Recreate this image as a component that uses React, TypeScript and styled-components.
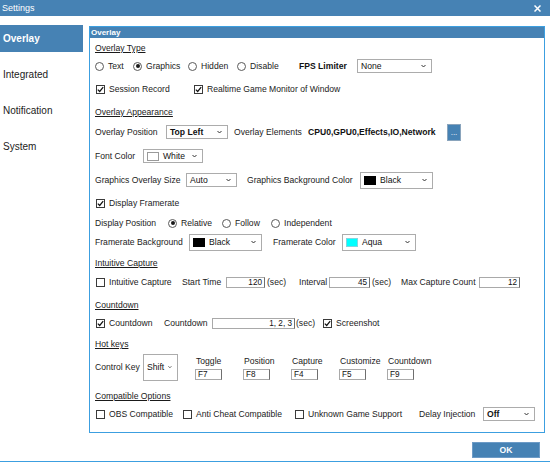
import React from "react";
import styled, { createGlobalStyle } from "styled-components";

const BLUE = "#4682b4";
const LINE = "#3c9fe0";

const GlobalStyle = createGlobalStyle`
  html, body {
    margin: 0;
    padding: 0;
    background: #ffffff;
  }

  body {
    font-family: "Liberation Sans", Arial, sans-serif;
    color: #1b1b1b;
  }

  * {
    box-sizing: border-box;
  }
`;

const Window = styled.div`
  width: 550px;
  height: 462px;
  display: flex;
  flex-direction: column;
  border-bottom: 1px solid ${LINE};
  background: #fff;
`;

const TitleBar = styled.div`
  height: 16px;
  flex-shrink: 0;
  background: ${BLUE};
  display: flex;
  align-items: center;
  justify-content: space-between;
  padding: 0 9px 0 2px;

  .title {
    color: #fff;
    font-size: 9px;
  }
`;

const Body = styled.div`
  flex: 1;
  display: flex;
  padding-top: 9px;
`;

const Sidebar = styled.nav`
  width: 83px;
  flex-shrink: 0;
  display: flex;
  flex-direction: column;
  gap: 9px;
`;

const NavItem = styled.div<{ $active?: boolean }>`
  height: 27px;
  display: flex;
  align-items: center;
  padding: 0 0 1px 3px;
  font-size: 10px;
  color: ${(p) => (p.$active ? "#fff" : "#1b1b1b")};
  background: ${(p) => (p.$active ? BLUE : "transparent")};
  font-weight: ${(p) => (p.$active ? 700 : 400)};
`;

const Content = styled.div`
  flex: 1;
  display: flex;
  flex-direction: column;
  margin: 1px 5px 0 6px;
`;

const Panel = styled.section`
  border: 1px solid ${LINE};
  padding-bottom: 10px;
`;

const PanelHeader = styled.div`
  height: 11px;
  background: ${BLUE};
  color: #fff;
  font-size: 8px;
  font-weight: 700;
  line-height: 11px;
  padding-left: 1px;
`;

const PanelBody = styled.div`
  padding-left: 5px;
  display: flex;
  flex-direction: column;
  font-size: 8.6px;
`;

const Heading = styled.div<{ $mt: number }>`
  height: 14px;
  margin-top: ${(p) => p.$mt}px;
  display: flex;
  align-items: center;
  text-decoration: underline;
  color: #1a1a1a;
`;

const Row = styled.div<{ $mt: number; $h?: number; $top?: boolean }>`
  height: ${(p) => p.$h ?? 16}px;
  margin-top: ${(p) => p.$mt}px;
  display: flex;
  align-items: ${(p) => (p.$top ? "flex-start" : "center")};
  white-space: nowrap;
`;

const Cell = styled.div<{ $w?: number }>`
  width: ${(p) => (p.$w ? `${p.$w}px` : "auto")};
  flex-shrink: 0;
  display: flex;
  align-items: center;
  height: 100%;
`;

const Text = styled.span<{ $bold?: boolean; $pl?: number }>`
  font-weight: ${(p) => (p.$bold ? 700 : 400)};
  padding-left: ${(p) => p.$pl ?? 0}px;
  color: ${(p) => (p.$bold ? "#111" : "#1b1b1b")};
`;

const SelectBox = styled.div<{ $w: number; $h: number; $bold?: boolean }>`
  width: ${(p) => p.$w}px;
  height: ${(p) => p.$h}px;
  flex-shrink: 0;
  border: 1px solid #acacac;
  background: #fff;
  display: flex;
  align-items: center;
  padding: 0 5px 0 3px;
  gap: 4px;
  font-weight: ${(p) => (p.$bold ? 700 : 400)};
  color: #111;

  .value {
    flex: 1;
  }
`;

const Swatch = styled.span<{ $color: string }>`
  width: 12px;
  height: 9px;
  background: ${(p) => p.$color};
  border: 1px solid ${(p) => (p.$color === "#ffffff" ? "#9a9a9a" : p.$color === "#000000" ? "#000" : "#7fd6e0")};
`;

const InputBox = styled.div<{ $w: number; $right?: boolean }>`
  width: ${(p) => p.$w}px;
  height: 11px;
  flex-shrink: 0;
  border: 1px solid #a9a9a9;
  border-right-color: #6f6f6f;
  background: #fff;
  display: flex;
  align-items: center;
  justify-content: ${(p) => (p.$right ? "flex-end" : "flex-start")};
  padding: 0 2px;
  font-size: 8.2px;
  color: #111;
`;

const BoxMark = styled.span`
  width: 9px;
  height: 9px;
  flex-shrink: 0;
  border: 1px solid #3a3a3a;
  background: #fff;
  display: flex;
  align-items: center;
  justify-content: center;
  margin: 0 4px 0 1px;
`;

const RadioMark = styled.span<{ $on?: boolean }>`
  width: 9px;
  height: 9px;
  flex-shrink: 0;
  border-radius: 50%;
  border: 1px solid #5a5a5a;
  background: #fff;
  display: flex;
  align-items: center;
  justify-content: center;
  margin-right: 4px;

  &::after {
    content: "";
    display: ${(p) => (p.$on ? "block" : "none")};
    width: 4px;
    height: 4px;
    border-radius: 50%;
    background: #1a1a1a;
  }
`;

const DotsButton = styled.div`
  width: 14px;
  height: 17px;
  background: ${BLUE};
  border: 1px solid #8aa4bc;
  color: #fff;
  font-size: 8px;
  display: flex;
  align-items: flex-end;
  justify-content: center;
  padding-bottom: 3px;
  line-height: 1;
`;

const KeyColumn = styled.div`
  width: 48px;
  flex-shrink: 0;
  display: flex;
  flex-direction: column;

  .key-label {
    height: 14px;
    display: flex;
    align-items: center;
    padding-left: 1px;
  }

  & > div:last-child {
    margin-top: 1px;
  }
`;

const Footer = styled.div`
  display: flex;
  justify-content: flex-end;
  padding-right: 5px;
  margin-top: 9px;
`;

const OkButton = styled.button`
  width: 68px;
  height: 16px;
  border: 1px solid #6d9bc6;
  background: ${BLUE};
  color: #fff;
  font-family: inherit;
  font-size: 8.6px;
  font-weight: 700;
  padding: 0;
`;

const Chevron = () => (
  <svg width="5" height="4" viewBox="0 0 5 4">
    <polyline points="0.5,1 2.5,3 4.5,1" fill="none" stroke="#333" strokeWidth="1" />
  </svg>
);

const Select = ({
  w,
  h = 14,
  value,
  swatch,
  bold,
}: {
  w: number;
  h?: number;
  value: string;
  swatch?: string;
  bold?: boolean;
}) => (
  <SelectBox $w={w} $h={h} $bold={bold}>
    {swatch && <Swatch $color={swatch} />}
    <span className="value">{value}</span>
    <Chevron />
  </SelectBox>
);

const Check = ({ label, on }: { label: string; on?: boolean }) => (
  <>
    <BoxMark>
      {on && (
        <svg width="7" height="7" viewBox="0 0 7 7">
          <polyline points="0.8,3.6 2.7,5.5 6.2,1.2" fill="none" stroke="#111" strokeWidth="1.2" />
        </svg>
      )}
    </BoxMark>
    <Text>{label}</Text>
  </>
);

const Radio = ({ label, on }: { label: string; on?: boolean }) => (
  <>
    <RadioMark $on={on} />
    <Text>{label}</Text>
  </>
);

const HOTKEYS = [
  { name: "Toggle", key: "F7" },
  { name: "Position", key: "F8" },
  { name: "Capture", key: "F4" },
  { name: "Customize", key: "F5" },
  { name: "Countdown", key: "F9" },
];

const NAV = ["Overlay", "Integrated", "Notification", "System"];

export default function App() {
  return (
    <>
      <GlobalStyle />
      <Window>
        <TitleBar>
          <span className="title">Settings</span>
          <svg width="7" height="7" viewBox="0 0 7 7">
            <path d="M0.5 0.5 L6.5 6.5 M6.5 0.5 L0.5 6.5" stroke="#fff" strokeWidth="1.5" />
          </svg>
        </TitleBar>
        <Body>
          <Sidebar>
            {NAV.map((n, i) => (
              <NavItem key={n} $active={i === 0}>
                {n}
              </NavItem>
            ))}
          </Sidebar>
          <Content>
            <Panel>
              <PanelHeader>Overlay</PanelHeader>
              <PanelBody>
                <Heading $mt={3}>Overlay Type</Heading>
                <Row $mt={3}>
                  <Cell $w={38}><Radio label="Text" /></Cell>
                  <Cell $w={55}><Radio label="Graphics" on /></Cell>
                  <Cell $w={49}><Radio label="Hidden" /></Cell>
                  <Cell $w={62}><Radio label="Disable" /></Cell>
                  <Cell $w={58}><Text $bold>FPS Limiter</Text></Cell>
                  <Select w={75} value="None" />
                </Row>
                <Row $mt={7}>
                  <Cell $w={98}><Check label="Session Record" on /></Cell>
                  <Cell><Check label="Realtime Game Monitor of Window" on /></Cell>
                </Row>

                <Heading $mt={8}>Overlay Appearance</Heading>
                <Row $mt={5}>
                  <Cell $w={71}><Text>Overlay Position</Text></Cell>
                  <Cell $w={68}><Select w={62} value="Top Left" bold /></Cell>
                  <Cell $w={74}><Text>Overlay Elements</Text></Cell>
                  <Cell $w={139}><Text $bold>CPU0,GPU0,Effects,IO,Network</Text></Cell>
                  <DotsButton>...</DotsButton>
                </Row>
                <Row $mt={8}>
                  <Cell $w={48}><Text>Font Color</Text></Cell>
                  <Select w={60} value="White" swatch="#ffffff" />
                </Row>
                <Row $mt={8}>
                  <Cell $w={91}><Text>Graphics Overlay Size</Text></Cell>
                  <Cell $w={61}><Select w={51} value="Auto" /></Cell>
                  <Cell $w={113}><Text>Graphics Background Color</Text></Cell>
                  <Select w={73} h={17} value="Black" swatch="#000000" />
                </Row>
                <Row $mt={7}>
                  <Cell><Check label="Display Framerate" on /></Cell>
                </Row>
                <Row $mt={4}>
                  <Cell $w={73}><Text>Display Position</Text></Cell>
                  <Cell $w={54}><Radio label="Relative" on /></Cell>
                  <Cell $w={49}><Radio label="Follow" /></Cell>
                  <Cell><Radio label="Independent" /></Cell>
                </Row>
                <Row $mt={3}>
                  <Cell $w={94}><Text>Framerate Background</Text></Cell>
                  <Cell $w={84}><Select w={73} h={17} value="Black" swatch="#000000" /></Cell>
                  <Cell $w={69}><Text>Framerate Color</Text></Cell>
                  <Select w={74} h={17} value="Aqua" swatch="#00ffff" />
                </Row>

                <Heading $mt={6}>Intuitive Capture</Heading>
                <Row $mt={4}>
                  <Cell $w={87}><Check label="Intuitive Capture" /></Cell>
                  <Cell $w={44}><Text>Start Time</Text></Cell>
                  <InputBox $w={39} $right>120</InputBox>
                  <Cell $w={34}><Text $pl={2}>(sec)</Text></Cell>
                  <Cell $w={30}><Text>Interval</Text></Cell>
                  <InputBox $w={41} $right>45</InputBox>
                  <Cell $w={31}><Text $pl={2}>(sec)</Text></Cell>
                  <Cell $w={78}><Text>Max Capture Count</Text></Cell>
                  <InputBox $w={41} $right>12</InputBox>
                </Row>

                <Heading $mt={8}>Countdown</Heading>
                <Row $mt={3}>
                  <Cell $w={69}><Check label="Countdown" on /></Cell>
                  <Cell $w={48}><Text>Countdown</Text></Cell>
                  <InputBox $w={83} $right>1, 2, 3</InputBox>
                  <Cell $w={27}><Text $pl={1}>(sec)</Text></Cell>
                  <Cell><Check label="Screenshot" on /></Cell>
                </Row>

                <Heading $mt={6}>Hot keys</Heading>
                <Row $mt={2} $h={28}>
                  <Cell $w={48}><Text>Control Key</Text></Cell>
                  <Cell $w={52}><Select w={35} h={27} value="Shift" /></Cell>
                  {HOTKEYS.map((k) => (
                    <KeyColumn key={k.name}>
                      <span className="key-label">{k.name}</span>
                      <InputBox $w={27}>{k.key}</InputBox>
                    </KeyColumn>
                  ))}
                </Row>

                <Heading $mt={8}>Compatible Options</Heading>
                <Row $mt={3}>
                  <Cell $w={87}><Check label="OBS Compatible" /></Cell>
                  <Cell $w={112}><Check label="Anti Cheat Compatible" /></Cell>
                  <Cell $w={125}><Check label="Unknown Game Support" /></Cell>
                  <Cell $w={64}><Text>Delay Injection</Text></Cell>
                  <Select w={52} value="Off" bold />
                </Row>
              </PanelBody>
            </Panel>
            <Footer>
              <OkButton>OK</OkButton>
            </Footer>
          </Content>
        </Body>
      </Window>
    </>
  );
}
